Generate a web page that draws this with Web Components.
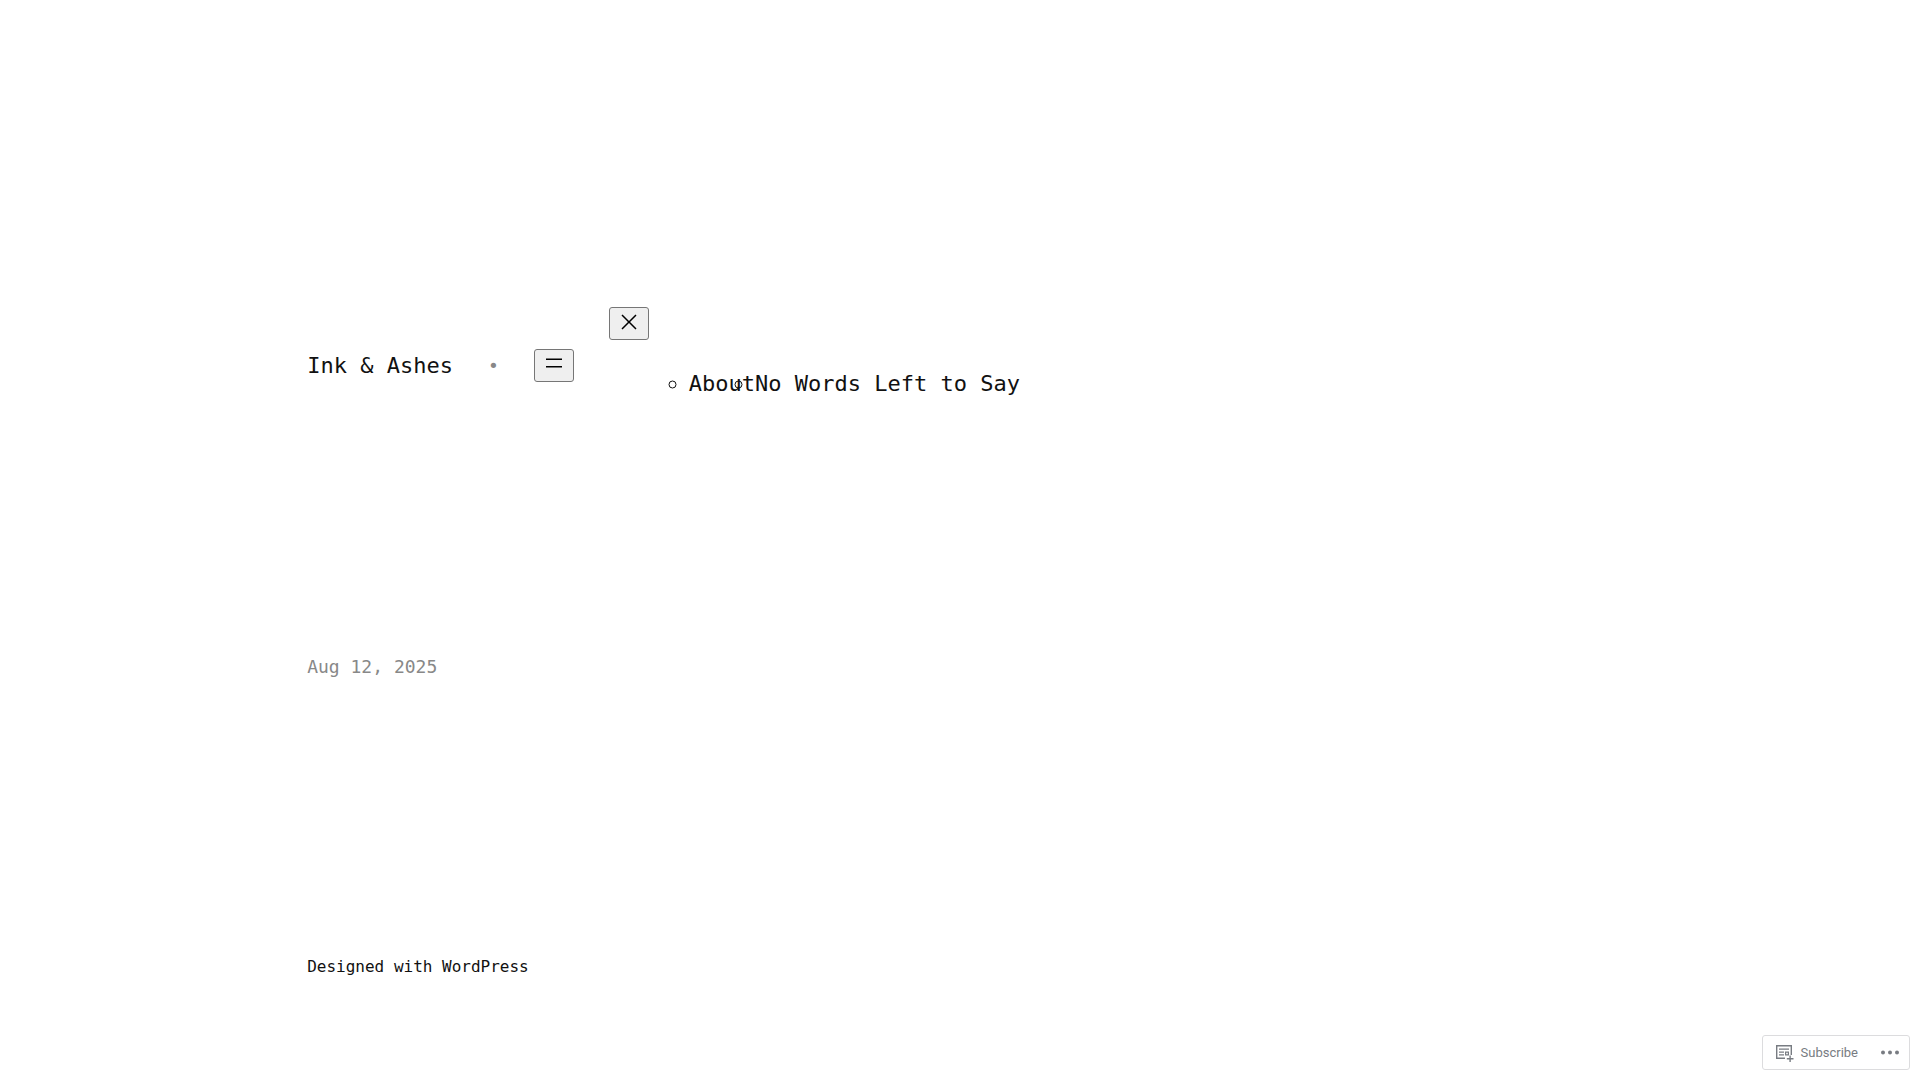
<!DOCTYPE html>
<html lang="en">
<head>
<meta charset="utf-8">
<title>Ink &amp; Ashes</title>
<style>
body { margin: 0; background: #fff; color: #111; font: 22px/35px "DejaVu Sans Mono", monospace; }
</style>
</head>
<body>
<blog-page>
  <site-header slot="header" name="Ink &amp; Ashes">
    <nav-item href="#about">About</nav-item>
    <nav-item href="#words">No Words Left to Say</nav-item>
  </site-header>
  <post-date>Aug 12, 2025</post-date>
  <site-footer slot="footer"></site-footer>
</blog-page>
<subscribe-bar></subscribe-bar>
<script>
const define = (name, html, setup) => customElements.define(name, class extends HTMLElement {
  constructor() {
    super();
    this.attachShadow({ mode: "open" }).innerHTML = html;
  }
  connectedCallback() {
    if (setup) setup(this, this.shadowRoot);
  }
});

define("blog-page", `
<style>
:host { display: flex; flex-direction: column; padding: 307px 16% 96px; }
main { padding: 229px 0 273px; }
</style>
<slot name="header"></slot>
<main><slot></slot></main>
<slot name="footer"></slot>`);

define("nav-item", `
<style>
:host { display: list-item; list-style: circle; }
a { color: inherit; text-decoration: none; }
</style>
<a><slot></slot></a>`, (el, root) => {
  el.setAttribute("role", "listitem");
  root.querySelector("a").href = el.getAttribute("href");
});

define("site-header", `
<style>
:host { display: block; }
header { display: flex; align-items: center; gap: 35px; }
a { color: inherit; text-decoration: none; }
.dot { color: #888; font-size: 18px; }
button { display: block; box-sizing: border-box; width: 40px; height: 33px; padding: 1px 6px; border: 1px solid #767676; border-radius: 3px; background: #efefef; color: #000; }
svg { display: block; width: 24px; height: 24px; margin: 0 auto 4px; fill: currentColor; }
nav { display: flex; flex-direction: column; gap: 26px; padding-bottom: 22px; }
.list { display: flex; padding-left: 80px; }
</style>
<header>
  <a class="name" href="#home"></a>
  <span class="dot">•</span>
  <button type="button" aria-label="Open menu"><svg viewBox="0 0 24 24"><path d="M4 7.5h16V9H4zM4 15h16v1.5H4z"/></svg></button>
  <nav>
    <button type="button" aria-label="Close menu"><svg viewBox="0 0 24 24"><path d="m13.06 12 6.47-6.47-1.06-1.06L12 10.94 5.53 4.47 4.47 5.53 10.94 12l-6.47 6.47 1.06 1.06L12 13.06l6.47 6.47 1.06-1.06L13.06 12Z"/></svg></button>
    <div class="list" role="list"><slot></slot></div>
  </nav>
</header>`, (el, root) => {
  root.querySelector(".name").textContent = el.getAttribute("name");
});

define("post-date", `
<style>
:host { display: block; font-size: 18px; line-height: 29px; }
a { color: #888; text-decoration: none; }
</style>
<a href="#post"><time datetime="2025-08-12"><slot></slot></time></a>`);

define("site-footer", `
<style>
:host { display: block; font-size: 16px; line-height: 26px; }
footer { display: block; }
a { color: inherit; text-decoration: none; }
</style>
<footer>Designed with <a href="#wordpress">WordPress</a></footer>`);

define("subscribe-bar", `
<style>
:host { position: fixed; right: 10px; bottom: 10px; box-sizing: border-box; height: 35px; display: flex; align-items: center; justify-content: space-between; gap: 22px; padding: 0 9px 0 12px; border: 1px solid #dcdcde; border-radius: 3px; background: #fff; color: #787c82; font: 13px/20px Roboto, sans-serif; }
a { display: flex; align-items: center; gap: 7px; color: inherit; text-decoration: none; }
button { display: block; padding: 0; border: 0; background: none; color: inherit; }
svg { display: block; fill: currentColor; }
</style>
<a href="#subscribe">
  <svg width="19" height="18" viewBox="0 0 19 18"><path d="M1 1h16v10h-1.400V2.400H2.400v11.200H10V15H1zM4 4.500h10v1.300H4zM4 7.500h5v1.200H4zM4 10.300h5v1.200H4zM10 7.500h4v4h-4zm1.200 1.200v1.600h1.600V8.700zM14.400 11.500h1.400v2.600h2.700v1.400h-2.700V18h-1.400v-2.500h-2.600v-1.400h2.600z" fill-rule="evenodd"/></svg>
  <span>Subscribe</span>
</a>
<button type="button" aria-label="More"><svg width="20" height="8" viewBox="0 0 20 8"><circle cx="3" cy="3.500" r="2"/><circle cx="10" cy="3.500" r="2"/><circle cx="17" cy="3.500" r="2"/></svg></button>`);
</script>
</body>
</html>
